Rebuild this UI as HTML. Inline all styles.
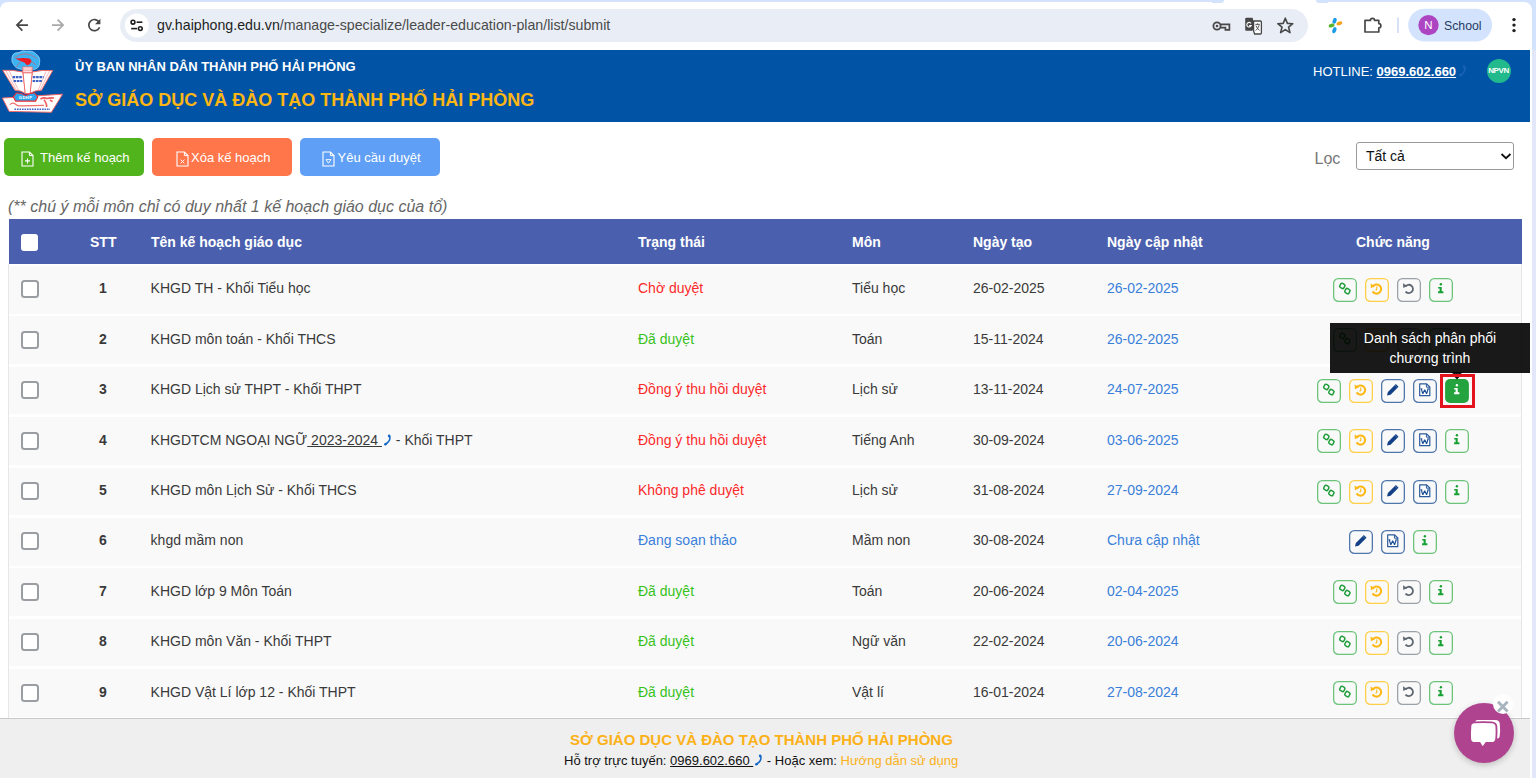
<!DOCTYPE html>
<html><head><meta charset="utf-8">
<style>
*{box-sizing:border-box;margin:0;padding:0}
html,body{width:1536px;height:778px;overflow:hidden;background:#fff;font-family:"Liberation Sans",sans-serif;color:#333}
.abs{position:absolute}
#chrome{position:absolute;left:0;top:0;width:1536px;height:50px;background:#d3e3fd}
#toolbar{position:absolute;left:0;top:2px;width:1532px;height:48px;background:#fff;border-radius:8px 8px 0 0}
#omni{position:absolute;left:120px;top:9px;width:1188px;height:33px;background:#e9eef6;border-radius:17px}
#url{position:absolute;left:157px;top:17px;font-size:14.2px;color:#1f1f1f;white-space:nowrap}
#header{position:absolute;left:0;top:49.5px;width:1530px;height:72.5px;background:#0153a5}
.t1{position:absolute;left:75px;top:59.2px;font-size:13px;font-weight:bold;color:#fff;white-space:nowrap}
.t2{position:absolute;left:75px;top:90.1px;font-size:18px;font-weight:bold;color:#fdb614;white-space:nowrap}
.btn{position:absolute;top:138px;width:140px;height:38px;border-radius:5px;color:#fff;font-size:13px;line-height:38px;text-align:center;white-space:nowrap}
.bt{position:absolute;top:149.6px;font-size:13px;color:#fff;white-space:nowrap}
.note{position:absolute;left:8px;top:198.2px;font-size:16px;font-style:italic;color:#666;white-space:nowrap}
#thead{position:absolute;left:9px;top:219px;width:1513px;height:45px;background:#4a60ae}
.th{position:absolute;top:233.5px;font-size:14px;font-weight:bold;color:#fff;white-space:nowrap}
.row{position:absolute;left:9px;width:1512px;height:47.6px;background:#f9f9f9}
.td{position:absolute;font-size:14px;color:#3a3a3a;white-space:nowrap}
.cbx{position:absolute;left:21px;width:18px;height:18px;border:2px solid #9a9da1;border-radius:3.5px;background:#fff}
.ic{position:absolute;width:24px;height:24px}
.g{border-color:#72c680}
.y{border-color:#ffd152}
.s{border-color:#9ea3aa}
.b{border-color:#5078ac}

.stt{left:90px;width:26px;text-align:center;font-weight:bold}
.cr{color:#fb2a2a}
.cg{color:#37c21b}
.cb{color:#3a7fd9}
.cb2{color:#3a7fd9}
.ic svg{position:absolute;left:0;top:0;overflow:visible}

u{text-decoration:underline}
.ph{display:inline-block;width:10px;height:12px;vertical-align:-1px}
</style></head><body>

<div id="chrome"></div>
<div id="toolbar"></div><div class="abs" style="left:1222px;top:0;width:96px;height:4px;background:#fff"></div><div class="abs" style="left:1212px;top:0;width:12px;height:3px;background:#d3e3fd;border-radius:0 0 6px 0"></div><div class="abs" style="left:1316px;top:0;width:12px;height:3px;background:#d3e3fd;border-radius:0 0 0 6px"></div>
<div id="omni"></div>

<svg class="abs" style="left:0;top:0" width="1536" height="50" viewBox="0 0 1536 50">
 <g fill="none" stroke="#474747" stroke-width="1.7" stroke-linecap="butt">
  <path d="M28 25.1 H17.2 M22.4 19.6 L16.9 25.1 L22.4 30.6"/>
 </g>
 <g fill="none" stroke="#a9a9a9" stroke-width="1.7">
  <path d="M52 25.1 H62.8 M57.6 19.6 L63.1 25.1 L57.6 30.6"/>
 </g>
 <g fill="none" stroke="#474747" stroke-width="1.7">
  <path d="M99.2 22.2 A5.6 5.6 0 1 0 99.6 27.2"/>
 </g>
 <path d="M100.4 18.8 V24.2 H95 Z" fill="#474747"/>
 <circle cx="136.9" cy="25.4" r="12" fill="#fff"/>
 <g fill="none" stroke="#1f1f1f" stroke-width="1.6">
  <circle cx="133" cy="22.2" r="1.9"/><path d="M136.6 22.2 H142.4"/>
  <circle cx="140.3" cy="28.6" r="1.9"/><path d="M131.2 28.6 H137"/>
 </g>
 <g fill="none" stroke="#474747" stroke-width="1.8">
  <circle cx="1217" cy="26" r="3.6"/>
 </g>
 <circle cx="1217" cy="26" r="1.3" fill="#474747"/>
 <path d="M1220.6 24.4 H1229.4 V29.8 H1225.4 V27.6 H1220.6" fill="none" stroke="#474747" stroke-width="1.7"/>
 <rect x="1245.2" y="17.8" width="7.8" height="13" rx="1" fill="#474747"/>
 <path d="M1253.6 21 H1260.4 Q1261.4 21 1261.4 22 V33 Q1261.4 34 1260.4 34 H1254.6 L1253.6 31 Z" fill="#fff" stroke="#474747" stroke-width="1.3"/>
 <path d="M1251 23.4 A2.3 2.3 0 1 0 1251.2 25.6 H1249.2" fill="none" stroke="#fff" stroke-width="1.1"/>
 <path d="M1255.4 24.4 H1259.8 M1257.6 23.2 V24.4 M1256 25.6 Q1257 29 1259.6 30.4 M1259.2 25.2 Q1258 29 1255.6 30.6" fill="none" stroke="#474747" stroke-width="0.9"/>
<path d="M1285.3 18.2 L1287.4 23.4 L1292.8 23.7 L1288.6 27.2 L1290 32.6 L1285.3 29.6 L1280.6 32.6 L1282 27.2 L1277.8 23.7 L1283.2 23.4 Z" fill="none" stroke="#474747" stroke-width="1.6" stroke-linejoin="round"/>
 <ellipse cx="1334.6" cy="20.8" rx="1.9" ry="3" fill="#1a9be8" transform="rotate(20 1334.6 20.8)"/>
 <ellipse cx="1339.4" cy="23.4" rx="1.8" ry="3" fill="#f5a31a" transform="rotate(70 1339.4 23.4)"/>
 <ellipse cx="1331.6" cy="25.6" rx="1.8" ry="3" fill="#59b42d" transform="rotate(75 1331.6 25.6)"/>
 <ellipse cx="1334.4" cy="30.2" rx="1.9" ry="3.2" fill="#1a9be8" transform="rotate(20 1334.4 30.2)"/>
 <path d="M1365 20.4 H1370.4 A2.1 2.1 0 0 1 1374.6 20.4 H1378.8 V23.6 A2.1 2.1 0 0 1 1378.8 27.8 V32 H1365 Z" fill="none" stroke="#474747" stroke-width="1.7" stroke-linejoin="round"/>
<rect x="1397.3" y="17.6" width="1.4" height="15.4" fill="#c6d5f0"/>
 <rect x="1408.2" y="8.7" width="83.8" height="32.8" rx="16.4" fill="#d3e3fd"/>
 <circle cx="1428.5" cy="25.1" r="10.2" fill="#ad45c3"/>
 <text x="1428.5" y="29.2" font-family="Liberation Sans" font-size="11.5" fill="#fff" text-anchor="middle">N</text>
 <text x="1444" y="30" font-family="Liberation Sans" font-size="12.3" fill="#243a63">School</text>
 <circle cx="1514" cy="19.6" r="1.7" fill="#1f1f1f"/><circle cx="1514" cy="25.1" r="1.7" fill="#1f1f1f"/><circle cx="1514" cy="30.6" r="1.7" fill="#1f1f1f"/>
</svg>
<div id="url">gv.haiphong.edu.vn<span style="color:#4a4a4a">/manage-specialize/leader-education-plan/list/submit</span></div>

<div id="header"></div>

<svg class="abs" style="left:0;top:48px" width="66" height="74" viewBox="0 0 66 74">
 <path d="M2.4 50.1 L62.5 46.2 L51.4 64.3 L9.2 63.4 Z" fill="#fff" stroke="#f06a6a" stroke-width="1"/>
 <path d="M9.8 56.6 Q13 54 15.6 56.2 Q18 58.4 21 57.8 L44 57.4" fill="none" stroke="#f07070" stroke-width="1.2"/>
 <path d="M40.4 51 Q44 49 47 50.6 Q50 49.6 54 50 M44 51.6 Q47 56 46.6 59 M50 52 L52.6 53.6" fill="none" stroke="#ef5a5a" stroke-width="1.6"/>
 <path d="M14.5 61.2 H50" stroke="#3b63c9" stroke-width="1.6" stroke-dasharray="1.6 0.9"/>
 <path d="M2.7 22.3 Q12 21.6 23 24 L25.6 45.6 Q20 42 15 42.4 Z" fill="#fff" stroke="#f06a6a" stroke-width="1"/>
 <path d="M52.7 22.6 Q42 21.6 32.2 24 L29.8 45.6 Q35 42 41.4 42.4 Z" fill="#fff" stroke="#f06a6a" stroke-width="1"/>
 <path d="M5.6 22.3 L16.6 42.5 M8.8 22.1 L18.6 42.4 M49.8 22.5 L39.8 42.5 M46.6 22.3 L38 42.4" stroke="#f28a8a" stroke-width="0.6"/>
 <path d="M12.6 29.2 H22.6 M13.6 33 H22.4 M32.8 29.2 H43.6 M32.6 33 H42.4" stroke="#3b62c6" stroke-width="2.2" stroke-dasharray="2.6 0.7"/>
 <path d="M23 24.7 L32.2 24.7 L30.2 45.6 L25.2 45.6 Z" fill="#fff" stroke="#f06a6a" stroke-width="1"/>
 <path d="M11.8 11 Q12 4 19 4.6 Q22 1.8 27 3.2 Q33 2.4 36 6 Q40.6 9 39.6 14.4 Q39.8 20.6 33.6 21.6 Q28 23 22 21.4 Q15.4 20.6 13.6 16.6 Q11.4 14 11.8 11 Z" fill="#3cb4f4" stroke="#bfe6ff" stroke-width="0.6"/>
 <path d="M14 10 Q26 1.4 37 10.6 M16 19 Q24 6 36.4 17" fill="none" stroke="#e9505a" stroke-width="0.6"/>
 <path d="M15.4 10.6 Q22 9.6 27.6 10.2 Q31.4 10.6 31.4 13 Q31 16.6 27 17.2 Q25.4 14.4 21 13 Q18 12.2 15.4 10.6 Z" fill="#ef1b24"/>
 <rect x="22.8" y="19" width="9.4" height="5.7" fill="#fff" stroke="#f06a6a" stroke-width="0.9"/>
 <path d="M23 21 H32 M23 22.8 H32" stroke="#f06a6a" stroke-width="0.7"/>
 <path d="M13.3 48.8 L16.4 45 Q21 44.6 25.8 47.6 Q30 44.6 34.6 45 L37.8 48.8 L35.6 53.1 H15.6 Z" fill="#2ba6ee" stroke="#ee2a30" stroke-width="1.1"/>
 <text x="25.6" y="51.2" font-family="Liberation Sans" font-size="4.2" font-weight="bold" fill="#fff" text-anchor="middle" letter-spacing="0.4">GDHP</text>
</svg>
<div class="t1">ỦY BAN NHÂN DÂN THÀNH PHỐ HẢI PHÒNG</div>
<div class="t2">SỞ GIÁO DỤC VÀ ĐÀO TẠO THÀNH PHỐ HẢI PHÒNG</div>

<div class="btn" style="left:4px;background:#52b41d"></div><div class="bt" style="left:40px">Thêm kế hoạch</div>
<div class="btn" style="left:152px;background:#ff764a"></div><div class="bt" style="left:191px">Xóa kế hoạch</div>
<div class="btn" style="left:300px;background:#5f9ff5"></div><div class="bt" style="left:337.5px">Yêu cầu duyệt</div>


<svg class="abs" style="left:21px;top:151px" width="13" height="16" viewBox="0 0 13 16"><path d="M1 1 H8.4 L12 4.6 V15 H1 Z" fill="none" stroke="#fff" stroke-width="1.1"/><path d="M8.4 1 V4.6 H12" fill="none" stroke="#fff" stroke-width="1"/><path d="M6.5 7.4 V12.4 M4 9.9 H9" stroke="#fff" stroke-width="1.1"/></svg>
<svg class="abs" style="left:176px;top:151px" width="13" height="16" viewBox="0 0 13 16"><path d="M1 1 H8.4 L12 4.6 V15 H1 Z" fill="none" stroke="#fff" stroke-width="1.1"/><path d="M8.4 1 V4.6 H12" fill="none" stroke="#fff" stroke-width="1"/><path d="M4.6 8.6 L8.4 12.4 M8.4 8.6 L4.6 12.4" stroke="#fff" stroke-width="0.9"/></svg>
<svg class="abs" style="left:321.5px;top:151px" width="13" height="16" viewBox="0 0 13 16"><path d="M1 1 H8.4 L12 4.6 V15 H1 Z" fill="none" stroke="#fff" stroke-width="1.1"/><path d="M8.4 1 V4.6 H12" fill="none" stroke="#fff" stroke-width="1"/><path d="M4 8.6 H9 L6.5 12.2 Z" fill="none" stroke="#fff" stroke-width="0.9"/></svg>
<div class="note">(** chú ý mỗi môn chỉ có duy nhất 1 kế hoạch giáo dục của tổ)</div>

<div id="thead"></div>
<div class="abs" style="left:21px;top:234px;width:17px;height:17px;background:#fff;border-radius:3px"></div>
<div class="th" style="left:90px">STT</div>
<div class="th" style="left:151px">Tên kế hoạch giáo dục</div>
<div class="th" style="left:638px">Trạng thái</div>
<div class="th" style="left:852px">Môn</div>
<div class="th" style="left:973px">Ngày tạo</div>
<div class="th" style="left:1107px">Ngày cập nhật</div>
<div class="th" style="left:1356px">Chức năng</div>


<div class="row" style="top:266.00px"></div>
<div class="cbx" style="top:280.40px"></div>
<div class="td stt" style="top:280.30px">1</div>
<div class="td" style="left:150.6px;top:280.30px">KHGD TH - Khối Tiểu học</div>
<div class="td cr" style="left:638px;top:280.30px">Chờ duyệt</div>
<div class="td" style="left:852px;top:280.30px">Tiểu học</div>
<div class="td" style="left:973px;top:280.30px">26-02-2025</div>
<div class="td cb2" style="left:1107px;top:280.30px">26-02-2025</div>
<div class="ic" style="left:1332.70px;top:277.90px"><svg width="24" height="24" viewBox="0 0 24 24"><rect x="0.65" y="0.65" width="22.7" height="22.7" rx="4.6" fill="none" stroke="#6cc47b" stroke-width="1.3"/><g fill="none" stroke="#1f9d3a" stroke-width="1.5"><rect x="7" y="5.6" width="4.6" height="4.6" rx="1.4" transform="rotate(30 9.3 7.9)"/><rect x="12.1" y="10.8" width="4.6" height="4.6" rx="1.4" transform="rotate(30 14.4 13.1)"/></g></svg></div>
<div class="ic" style="left:1364.75px;top:277.90px"><svg width="24" height="24" viewBox="0 0 24 24"><rect x="0.65" y="0.65" width="22.7" height="22.7" rx="4.6" fill="none" stroke="#ffcf4a" stroke-width="1.3"/><path d="M7.6 8.7 A4.6 4.6 0 1 1 7.6 13.4" fill="none" stroke="#fdb813" stroke-width="2.1"/><path d="M5.6 5.4 L10 8.2 L5.9 10.3 Z" fill="#fdb813"/><path d="M11.8 8.6 V11.2 L10.6 12.3" fill="none" stroke="#fdb813" stroke-width="1.1"/></svg></div>
<div class="ic" style="left:1396.80px;top:277.90px"><svg width="24" height="24" viewBox="0 0 24 24"><rect x="0.65" y="0.65" width="22.7" height="22.7" rx="4.6" fill="none" stroke="#9ba1a8" stroke-width="1.3"/><path d="M8.3 8.6 A4.2 4.2 0 1 1 8.5 13.6" fill="none" stroke="#5f6771" stroke-width="1.8"/><path d="M6 5.3 L10.2 8.1 L6.3 10.1 Z" fill="#5f6771"/></svg></div>
<div class="ic" style="left:1428.85px;top:277.90px"><svg width="24" height="24" viewBox="0 0 24 24"><rect x="0.65" y="0.65" width="22.7" height="22.7" rx="4.6" fill="none" stroke="#6cc47b" stroke-width="1.3"/><circle cx="11.9" cy="6.2" r="1.2" fill="#17a134"/><path d="M9.2 8.9 H12.7 V13.3 H14.4 V15.2 H9.1 V13.3 H10.6 V10.5 H9.2 Z" fill="#17a134"/></svg></div>
<div class="row" style="top:316.40px"></div>
<div class="cbx" style="top:330.80px"></div>
<div class="td stt" style="top:330.70px">2</div>
<div class="td" style="left:150.6px;top:330.70px">KHGD môn toán - Khối THCS</div>
<div class="td cg" style="left:638px;top:330.70px">Đã duyệt</div>
<div class="td" style="left:852px;top:330.70px">Toán</div>
<div class="td" style="left:973px;top:330.70px">15-11-2024</div>
<div class="td cb2" style="left:1107px;top:330.70px">26-02-2025</div>
<div class="ic" style="left:1332.70px;top:328.30px"><svg width="24" height="24" viewBox="0 0 24 24"><rect x="0.65" y="0.65" width="22.7" height="22.7" rx="4.6" fill="none" stroke="#6cc47b" stroke-width="1.3"/><g fill="none" stroke="#1f9d3a" stroke-width="1.5"><rect x="7" y="5.6" width="4.6" height="4.6" rx="1.4" transform="rotate(30 9.3 7.9)"/><rect x="12.1" y="10.8" width="4.6" height="4.6" rx="1.4" transform="rotate(30 14.4 13.1)"/></g></svg></div>
<div class="ic" style="left:1364.75px;top:328.30px"><svg width="24" height="24" viewBox="0 0 24 24"><rect x="0.65" y="0.65" width="22.7" height="22.7" rx="4.6" fill="none" stroke="#ffcf4a" stroke-width="1.3"/><path d="M7.6 8.7 A4.6 4.6 0 1 1 7.6 13.4" fill="none" stroke="#fdb813" stroke-width="2.1"/><path d="M5.6 5.4 L10 8.2 L5.9 10.3 Z" fill="#fdb813"/><path d="M11.8 8.6 V11.2 L10.6 12.3" fill="none" stroke="#fdb813" stroke-width="1.1"/></svg></div>
<div class="ic" style="left:1396.80px;top:328.30px"><svg width="24" height="24" viewBox="0 0 24 24"><rect x="0.65" y="0.65" width="22.7" height="22.7" rx="4.6" fill="none" stroke="#9ba1a8" stroke-width="1.3"/><path d="M8.3 8.6 A4.2 4.2 0 1 1 8.5 13.6" fill="none" stroke="#5f6771" stroke-width="1.8"/><path d="M6 5.3 L10.2 8.1 L6.3 10.1 Z" fill="#5f6771"/></svg></div>
<div class="ic" style="left:1428.85px;top:328.30px"><svg width="24" height="24" viewBox="0 0 24 24"><rect x="0.65" y="0.65" width="22.7" height="22.7" rx="4.6" fill="none" stroke="#6cc47b" stroke-width="1.3"/><circle cx="11.9" cy="6.2" r="1.2" fill="#17a134"/><path d="M9.2 8.9 H12.7 V13.3 H14.4 V15.2 H9.1 V13.3 H10.6 V10.5 H9.2 Z" fill="#17a134"/></svg></div>
<div class="row" style="top:366.80px"></div>
<div class="cbx" style="top:381.20px"></div>
<div class="td stt" style="top:381.10px">3</div>
<div class="td" style="left:150.6px;top:381.10px">KHGD Lịch sử THPT - Khối THPT</div>
<div class="td cr" style="left:638px;top:381.10px">Đồng ý thu hồi duyệt</div>
<div class="td" style="left:852px;top:381.10px">Lịch sử</div>
<div class="td" style="left:973px;top:381.10px">13-11-2024</div>
<div class="td cb2" style="left:1107px;top:381.10px">24-07-2025</div>
<div class="ic" style="left:1316.60px;top:378.70px"><svg width="24" height="24" viewBox="0 0 24 24"><rect x="0.65" y="0.65" width="22.7" height="22.7" rx="4.6" fill="none" stroke="#6cc47b" stroke-width="1.3"/><g fill="none" stroke="#1f9d3a" stroke-width="1.5"><rect x="7" y="5.6" width="4.6" height="4.6" rx="1.4" transform="rotate(30 9.3 7.9)"/><rect x="12.1" y="10.8" width="4.6" height="4.6" rx="1.4" transform="rotate(30 14.4 13.1)"/></g></svg></div>
<div class="ic" style="left:1348.65px;top:378.70px"><svg width="24" height="24" viewBox="0 0 24 24"><rect x="0.65" y="0.65" width="22.7" height="22.7" rx="4.6" fill="none" stroke="#ffcf4a" stroke-width="1.3"/><path d="M7.6 8.7 A4.6 4.6 0 1 1 7.6 13.4" fill="none" stroke="#fdb813" stroke-width="2.1"/><path d="M5.6 5.4 L10 8.2 L5.9 10.3 Z" fill="#fdb813"/><path d="M11.8 8.6 V11.2 L10.6 12.3" fill="none" stroke="#fdb813" stroke-width="1.1"/></svg></div>
<div class="ic" style="left:1380.70px;top:378.70px"><svg width="24" height="24" viewBox="0 0 24 24"><rect x="0.65" y="0.65" width="22.7" height="22.7" rx="4.6" fill="none" stroke="#4f77ab" stroke-width="1.3"/><path d="M6 16.6 L6.86 13.06 L14.86 5.06 L17.54 7.74 L9.54 15.74 Z" fill="#123f86"/><path d="M13.9 6.1 L16.5 8.7" stroke="#8aa6d0" stroke-width="0.5"/></svg></div>
<div class="ic" style="left:1412.75px;top:378.70px"><svg width="24" height="24" viewBox="0 0 24 24"><rect x="0.65" y="0.65" width="22.7" height="22.7" rx="4.6" fill="none" stroke="#4f77ab" stroke-width="1.3"/><path d="M6.7 4.8 H13.6 L16.8 8 V16.7 H6.7 Z" fill="#fff" stroke="#2a5a9c" stroke-width="1.2" stroke-linejoin="round"/><path d="M13.4 4.9 V8.2 H16.7" fill="none" stroke="#2a5a9c" stroke-width="1"/><path d="M8.3 9.8 L9.8 14.8 L11.7 10.8 L13.6 14.8 L15.1 9.8" fill="none" stroke="#1d4f94" stroke-width="1.2" stroke-linejoin="bevel"/><path d="M7.5 9.8 H9.4 M14.4 9.8 H16" stroke="#1d4f94" stroke-width="0.9"/></svg></div>
<div class="ic" style="left:1444.80px;top:378.70px"><svg width="24" height="24" viewBox="0 0 24 24"><rect x="0.1" y="0.1" width="23.8" height="23.8" rx="5" fill="#24a33f"/><circle cx="11.9" cy="6.2" r="1.2" fill="#fff"/><path d="M9.2 8.9 H12.7 V13.3 H14.4 V15.2 H9.1 V13.3 H10.6 V10.5 H9.2 Z" fill="#fff"/></svg></div>
<div class="row" style="top:417.20px"></div>
<div class="cbx" style="top:431.60px"></div>
<div class="td stt" style="top:431.50px">4</div>
<div class="td" style="left:150.6px;top:431.50px">KHGDTCM NGOẠI NGỮ<u> 2023-2024 </u><svg width="9" height="12" viewBox="0 0 9 12" style="vertical-align:-1px;margin-left:1px"><path d="M6.3 1.6 Q8.6 6.6 2.2 10.4" stroke="#1468c8" stroke-width="1.5" fill="none"/><ellipse cx="6.2" cy="2" rx="1.3" ry="1.6" fill="#1468c8" transform="rotate(-20 6.2 2)"/><ellipse cx="2.6" cy="10.1" rx="1.7" ry="1.3" fill="#1468c8" transform="rotate(-20 2.6 10.1)"/></svg> - Khối THPT</div>
<div class="td cr" style="left:638px;top:431.50px">Đồng ý thu hồi duyệt</div>
<div class="td" style="left:852px;top:431.50px">Tiếng Anh</div>
<div class="td" style="left:973px;top:431.50px">30-09-2024</div>
<div class="td cb2" style="left:1107px;top:431.50px">03-06-2025</div>
<div class="ic" style="left:1316.60px;top:429.10px"><svg width="24" height="24" viewBox="0 0 24 24"><rect x="0.65" y="0.65" width="22.7" height="22.7" rx="4.6" fill="none" stroke="#6cc47b" stroke-width="1.3"/><g fill="none" stroke="#1f9d3a" stroke-width="1.5"><rect x="7" y="5.6" width="4.6" height="4.6" rx="1.4" transform="rotate(30 9.3 7.9)"/><rect x="12.1" y="10.8" width="4.6" height="4.6" rx="1.4" transform="rotate(30 14.4 13.1)"/></g></svg></div>
<div class="ic" style="left:1348.65px;top:429.10px"><svg width="24" height="24" viewBox="0 0 24 24"><rect x="0.65" y="0.65" width="22.7" height="22.7" rx="4.6" fill="none" stroke="#ffcf4a" stroke-width="1.3"/><path d="M7.6 8.7 A4.6 4.6 0 1 1 7.6 13.4" fill="none" stroke="#fdb813" stroke-width="2.1"/><path d="M5.6 5.4 L10 8.2 L5.9 10.3 Z" fill="#fdb813"/><path d="M11.8 8.6 V11.2 L10.6 12.3" fill="none" stroke="#fdb813" stroke-width="1.1"/></svg></div>
<div class="ic" style="left:1380.70px;top:429.10px"><svg width="24" height="24" viewBox="0 0 24 24"><rect x="0.65" y="0.65" width="22.7" height="22.7" rx="4.6" fill="none" stroke="#4f77ab" stroke-width="1.3"/><path d="M6 16.6 L6.86 13.06 L14.86 5.06 L17.54 7.74 L9.54 15.74 Z" fill="#123f86"/><path d="M13.9 6.1 L16.5 8.7" stroke="#8aa6d0" stroke-width="0.5"/></svg></div>
<div class="ic" style="left:1412.75px;top:429.10px"><svg width="24" height="24" viewBox="0 0 24 24"><rect x="0.65" y="0.65" width="22.7" height="22.7" rx="4.6" fill="none" stroke="#4f77ab" stroke-width="1.3"/><path d="M6.7 4.8 H13.6 L16.8 8 V16.7 H6.7 Z" fill="#fff" stroke="#2a5a9c" stroke-width="1.2" stroke-linejoin="round"/><path d="M13.4 4.9 V8.2 H16.7" fill="none" stroke="#2a5a9c" stroke-width="1"/><path d="M8.3 9.8 L9.8 14.8 L11.7 10.8 L13.6 14.8 L15.1 9.8" fill="none" stroke="#1d4f94" stroke-width="1.2" stroke-linejoin="bevel"/><path d="M7.5 9.8 H9.4 M14.4 9.8 H16" stroke="#1d4f94" stroke-width="0.9"/></svg></div>
<div class="ic" style="left:1444.80px;top:429.10px"><svg width="24" height="24" viewBox="0 0 24 24"><rect x="0.65" y="0.65" width="22.7" height="22.7" rx="4.6" fill="none" stroke="#6cc47b" stroke-width="1.3"/><circle cx="11.9" cy="6.2" r="1.2" fill="#17a134"/><path d="M9.2 8.9 H12.7 V13.3 H14.4 V15.2 H9.1 V13.3 H10.6 V10.5 H9.2 Z" fill="#17a134"/></svg></div>
<div class="row" style="top:467.60px"></div>
<div class="cbx" style="top:482.00px"></div>
<div class="td stt" style="top:481.90px">5</div>
<div class="td" style="left:150.6px;top:481.90px">KHGD môn Lịch Sử - Khối THCS</div>
<div class="td cr" style="left:638px;top:481.90px">Không phê duyệt</div>
<div class="td" style="left:852px;top:481.90px">Lịch sử</div>
<div class="td" style="left:973px;top:481.90px">31-08-2024</div>
<div class="td cb2" style="left:1107px;top:481.90px">27-09-2024</div>
<div class="ic" style="left:1316.60px;top:479.50px"><svg width="24" height="24" viewBox="0 0 24 24"><rect x="0.65" y="0.65" width="22.7" height="22.7" rx="4.6" fill="none" stroke="#6cc47b" stroke-width="1.3"/><g fill="none" stroke="#1f9d3a" stroke-width="1.5"><rect x="7" y="5.6" width="4.6" height="4.6" rx="1.4" transform="rotate(30 9.3 7.9)"/><rect x="12.1" y="10.8" width="4.6" height="4.6" rx="1.4" transform="rotate(30 14.4 13.1)"/></g></svg></div>
<div class="ic" style="left:1348.65px;top:479.50px"><svg width="24" height="24" viewBox="0 0 24 24"><rect x="0.65" y="0.65" width="22.7" height="22.7" rx="4.6" fill="none" stroke="#ffcf4a" stroke-width="1.3"/><path d="M7.6 8.7 A4.6 4.6 0 1 1 7.6 13.4" fill="none" stroke="#fdb813" stroke-width="2.1"/><path d="M5.6 5.4 L10 8.2 L5.9 10.3 Z" fill="#fdb813"/><path d="M11.8 8.6 V11.2 L10.6 12.3" fill="none" stroke="#fdb813" stroke-width="1.1"/></svg></div>
<div class="ic" style="left:1380.70px;top:479.50px"><svg width="24" height="24" viewBox="0 0 24 24"><rect x="0.65" y="0.65" width="22.7" height="22.7" rx="4.6" fill="none" stroke="#4f77ab" stroke-width="1.3"/><path d="M6 16.6 L6.86 13.06 L14.86 5.06 L17.54 7.74 L9.54 15.74 Z" fill="#123f86"/><path d="M13.9 6.1 L16.5 8.7" stroke="#8aa6d0" stroke-width="0.5"/></svg></div>
<div class="ic" style="left:1412.75px;top:479.50px"><svg width="24" height="24" viewBox="0 0 24 24"><rect x="0.65" y="0.65" width="22.7" height="22.7" rx="4.6" fill="none" stroke="#4f77ab" stroke-width="1.3"/><path d="M6.7 4.8 H13.6 L16.8 8 V16.7 H6.7 Z" fill="#fff" stroke="#2a5a9c" stroke-width="1.2" stroke-linejoin="round"/><path d="M13.4 4.9 V8.2 H16.7" fill="none" stroke="#2a5a9c" stroke-width="1"/><path d="M8.3 9.8 L9.8 14.8 L11.7 10.8 L13.6 14.8 L15.1 9.8" fill="none" stroke="#1d4f94" stroke-width="1.2" stroke-linejoin="bevel"/><path d="M7.5 9.8 H9.4 M14.4 9.8 H16" stroke="#1d4f94" stroke-width="0.9"/></svg></div>
<div class="ic" style="left:1444.80px;top:479.50px"><svg width="24" height="24" viewBox="0 0 24 24"><rect x="0.65" y="0.65" width="22.7" height="22.7" rx="4.6" fill="none" stroke="#6cc47b" stroke-width="1.3"/><circle cx="11.9" cy="6.2" r="1.2" fill="#17a134"/><path d="M9.2 8.9 H12.7 V13.3 H14.4 V15.2 H9.1 V13.3 H10.6 V10.5 H9.2 Z" fill="#17a134"/></svg></div>
<div class="row" style="top:518.00px"></div>
<div class="cbx" style="top:532.40px"></div>
<div class="td stt" style="top:532.30px">6</div>
<div class="td" style="left:150.6px;top:532.30px">khgd mầm non</div>
<div class="td cb" style="left:638px;top:532.30px">Đang soạn thảo</div>
<div class="td" style="left:852px;top:532.30px">Mầm non</div>
<div class="td" style="left:973px;top:532.30px">30-08-2024</div>
<div class="td cb2" style="left:1107px;top:532.30px">Chưa cập nhật</div>
<div class="ic" style="left:1348.60px;top:529.90px"><svg width="24" height="24" viewBox="0 0 24 24"><rect x="0.65" y="0.65" width="22.7" height="22.7" rx="4.6" fill="none" stroke="#4f77ab" stroke-width="1.3"/><path d="M6 16.6 L6.86 13.06 L14.86 5.06 L17.54 7.74 L9.54 15.74 Z" fill="#123f86"/><path d="M13.9 6.1 L16.5 8.7" stroke="#8aa6d0" stroke-width="0.5"/></svg></div>
<div class="ic" style="left:1380.65px;top:529.90px"><svg width="24" height="24" viewBox="0 0 24 24"><rect x="0.65" y="0.65" width="22.7" height="22.7" rx="4.6" fill="none" stroke="#4f77ab" stroke-width="1.3"/><path d="M6.7 4.8 H13.6 L16.8 8 V16.7 H6.7 Z" fill="#fff" stroke="#2a5a9c" stroke-width="1.2" stroke-linejoin="round"/><path d="M13.4 4.9 V8.2 H16.7" fill="none" stroke="#2a5a9c" stroke-width="1"/><path d="M8.3 9.8 L9.8 14.8 L11.7 10.8 L13.6 14.8 L15.1 9.8" fill="none" stroke="#1d4f94" stroke-width="1.2" stroke-linejoin="bevel"/><path d="M7.5 9.8 H9.4 M14.4 9.8 H16" stroke="#1d4f94" stroke-width="0.9"/></svg></div>
<div class="ic" style="left:1412.70px;top:529.90px"><svg width="24" height="24" viewBox="0 0 24 24"><rect x="0.65" y="0.65" width="22.7" height="22.7" rx="4.6" fill="none" stroke="#6cc47b" stroke-width="1.3"/><circle cx="11.9" cy="6.2" r="1.2" fill="#17a134"/><path d="M9.2 8.9 H12.7 V13.3 H14.4 V15.2 H9.1 V13.3 H10.6 V10.5 H9.2 Z" fill="#17a134"/></svg></div>
<div class="row" style="top:568.40px"></div>
<div class="cbx" style="top:582.80px"></div>
<div class="td stt" style="top:582.70px">7</div>
<div class="td" style="left:150.6px;top:582.70px">KHGD lớp 9 Môn Toán</div>
<div class="td cg" style="left:638px;top:582.70px">Đã duyệt</div>
<div class="td" style="left:852px;top:582.70px">Toán</div>
<div class="td" style="left:973px;top:582.70px">20-06-2024</div>
<div class="td cb2" style="left:1107px;top:582.70px">02-04-2025</div>
<div class="ic" style="left:1332.70px;top:580.30px"><svg width="24" height="24" viewBox="0 0 24 24"><rect x="0.65" y="0.65" width="22.7" height="22.7" rx="4.6" fill="none" stroke="#6cc47b" stroke-width="1.3"/><g fill="none" stroke="#1f9d3a" stroke-width="1.5"><rect x="7" y="5.6" width="4.6" height="4.6" rx="1.4" transform="rotate(30 9.3 7.9)"/><rect x="12.1" y="10.8" width="4.6" height="4.6" rx="1.4" transform="rotate(30 14.4 13.1)"/></g></svg></div>
<div class="ic" style="left:1364.75px;top:580.30px"><svg width="24" height="24" viewBox="0 0 24 24"><rect x="0.65" y="0.65" width="22.7" height="22.7" rx="4.6" fill="none" stroke="#ffcf4a" stroke-width="1.3"/><path d="M7.6 8.7 A4.6 4.6 0 1 1 7.6 13.4" fill="none" stroke="#fdb813" stroke-width="2.1"/><path d="M5.6 5.4 L10 8.2 L5.9 10.3 Z" fill="#fdb813"/><path d="M11.8 8.6 V11.2 L10.6 12.3" fill="none" stroke="#fdb813" stroke-width="1.1"/></svg></div>
<div class="ic" style="left:1396.80px;top:580.30px"><svg width="24" height="24" viewBox="0 0 24 24"><rect x="0.65" y="0.65" width="22.7" height="22.7" rx="4.6" fill="none" stroke="#9ba1a8" stroke-width="1.3"/><path d="M8.3 8.6 A4.2 4.2 0 1 1 8.5 13.6" fill="none" stroke="#5f6771" stroke-width="1.8"/><path d="M6 5.3 L10.2 8.1 L6.3 10.1 Z" fill="#5f6771"/></svg></div>
<div class="ic" style="left:1428.85px;top:580.30px"><svg width="24" height="24" viewBox="0 0 24 24"><rect x="0.65" y="0.65" width="22.7" height="22.7" rx="4.6" fill="none" stroke="#6cc47b" stroke-width="1.3"/><circle cx="11.9" cy="6.2" r="1.2" fill="#17a134"/><path d="M9.2 8.9 H12.7 V13.3 H14.4 V15.2 H9.1 V13.3 H10.6 V10.5 H9.2 Z" fill="#17a134"/></svg></div>
<div class="row" style="top:618.80px"></div>
<div class="cbx" style="top:633.20px"></div>
<div class="td stt" style="top:633.10px">8</div>
<div class="td" style="left:150.6px;top:633.10px">KHGD môn Văn - Khối THPT</div>
<div class="td cg" style="left:638px;top:633.10px">Đã duyệt</div>
<div class="td" style="left:852px;top:633.10px">Ngữ văn</div>
<div class="td" style="left:973px;top:633.10px">22-02-2024</div>
<div class="td cb2" style="left:1107px;top:633.10px">20-06-2024</div>
<div class="ic" style="left:1332.70px;top:630.70px"><svg width="24" height="24" viewBox="0 0 24 24"><rect x="0.65" y="0.65" width="22.7" height="22.7" rx="4.6" fill="none" stroke="#6cc47b" stroke-width="1.3"/><g fill="none" stroke="#1f9d3a" stroke-width="1.5"><rect x="7" y="5.6" width="4.6" height="4.6" rx="1.4" transform="rotate(30 9.3 7.9)"/><rect x="12.1" y="10.8" width="4.6" height="4.6" rx="1.4" transform="rotate(30 14.4 13.1)"/></g></svg></div>
<div class="ic" style="left:1364.75px;top:630.70px"><svg width="24" height="24" viewBox="0 0 24 24"><rect x="0.65" y="0.65" width="22.7" height="22.7" rx="4.6" fill="none" stroke="#ffcf4a" stroke-width="1.3"/><path d="M7.6 8.7 A4.6 4.6 0 1 1 7.6 13.4" fill="none" stroke="#fdb813" stroke-width="2.1"/><path d="M5.6 5.4 L10 8.2 L5.9 10.3 Z" fill="#fdb813"/><path d="M11.8 8.6 V11.2 L10.6 12.3" fill="none" stroke="#fdb813" stroke-width="1.1"/></svg></div>
<div class="ic" style="left:1396.80px;top:630.70px"><svg width="24" height="24" viewBox="0 0 24 24"><rect x="0.65" y="0.65" width="22.7" height="22.7" rx="4.6" fill="none" stroke="#9ba1a8" stroke-width="1.3"/><path d="M8.3 8.6 A4.2 4.2 0 1 1 8.5 13.6" fill="none" stroke="#5f6771" stroke-width="1.8"/><path d="M6 5.3 L10.2 8.1 L6.3 10.1 Z" fill="#5f6771"/></svg></div>
<div class="ic" style="left:1428.85px;top:630.70px"><svg width="24" height="24" viewBox="0 0 24 24"><rect x="0.65" y="0.65" width="22.7" height="22.7" rx="4.6" fill="none" stroke="#6cc47b" stroke-width="1.3"/><circle cx="11.9" cy="6.2" r="1.2" fill="#17a134"/><path d="M9.2 8.9 H12.7 V13.3 H14.4 V15.2 H9.1 V13.3 H10.6 V10.5 H9.2 Z" fill="#17a134"/></svg></div>
<div class="row" style="top:669.20px"></div>
<div class="cbx" style="top:683.60px"></div>
<div class="td stt" style="top:683.50px">9</div>
<div class="td" style="left:150.6px;top:683.50px">KHGD Vật Lí lớp 12 - Khối THPT</div>
<div class="td cg" style="left:638px;top:683.50px">Đã duyệt</div>
<div class="td" style="left:852px;top:683.50px">Vật lí</div>
<div class="td" style="left:973px;top:683.50px">16-01-2024</div>
<div class="td cb2" style="left:1107px;top:683.50px">27-08-2024</div>
<div class="ic" style="left:1332.70px;top:681.10px"><svg width="24" height="24" viewBox="0 0 24 24"><rect x="0.65" y="0.65" width="22.7" height="22.7" rx="4.6" fill="none" stroke="#6cc47b" stroke-width="1.3"/><g fill="none" stroke="#1f9d3a" stroke-width="1.5"><rect x="7" y="5.6" width="4.6" height="4.6" rx="1.4" transform="rotate(30 9.3 7.9)"/><rect x="12.1" y="10.8" width="4.6" height="4.6" rx="1.4" transform="rotate(30 14.4 13.1)"/></g></svg></div>
<div class="ic" style="left:1364.75px;top:681.10px"><svg width="24" height="24" viewBox="0 0 24 24"><rect x="0.65" y="0.65" width="22.7" height="22.7" rx="4.6" fill="none" stroke="#ffcf4a" stroke-width="1.3"/><path d="M7.6 8.7 A4.6 4.6 0 1 1 7.6 13.4" fill="none" stroke="#fdb813" stroke-width="2.1"/><path d="M5.6 5.4 L10 8.2 L5.9 10.3 Z" fill="#fdb813"/><path d="M11.8 8.6 V11.2 L10.6 12.3" fill="none" stroke="#fdb813" stroke-width="1.1"/></svg></div>
<div class="ic" style="left:1396.80px;top:681.10px"><svg width="24" height="24" viewBox="0 0 24 24"><rect x="0.65" y="0.65" width="22.7" height="22.7" rx="4.6" fill="none" stroke="#9ba1a8" stroke-width="1.3"/><path d="M8.3 8.6 A4.2 4.2 0 1 1 8.5 13.6" fill="none" stroke="#5f6771" stroke-width="1.8"/><path d="M6 5.3 L10.2 8.1 L6.3 10.1 Z" fill="#5f6771"/></svg></div>
<div class="ic" style="left:1428.85px;top:681.10px"><svg width="24" height="24" viewBox="0 0 24 24"><rect x="0.65" y="0.65" width="22.7" height="22.7" rx="4.6" fill="none" stroke="#6cc47b" stroke-width="1.3"/><circle cx="11.9" cy="6.2" r="1.2" fill="#17a134"/><path d="M9.2 8.9 H12.7 V13.3 H14.4 V15.2 H9.1 V13.3 H10.6 V10.5 H9.2 Z" fill="#17a134"/></svg></div>

<div class="abs" style="left:8px;top:264px;width:1px;height:454px;background:#e6e6e6"></div><div class="abs" style="left:1521px;top:264px;width:1px;height:454px;background:#e6e6e6"></div>
<div id="footer" class="abs" style="left:0;top:718px;width:1530px;height:60px;background:#efefef;border-top:1.5px solid #c9c9c9"></div>
<div class="abs" style="left:570px;top:730.8px;font-size:15px;font-weight:bold;color:#fbb117;white-space:nowrap">SỞ GIÁO DỤC VÀ ĐÀO TẠO THÀNH PHỐ HẢI PHÒNG</div>
<div class="abs" style="left:564px;top:753.4px;font-size:13px;color:#111;white-space:nowrap">Hỗ trợ trực tuyến: <u>0969.602.660 </u><svg width="9" height="12" viewBox="0 0 9 12" style="vertical-align:-1px;margin-left:1px"><path d="M6.3 1.6 Q8.6 6.6 2.2 10.4" stroke="#1468c8" stroke-width="1.5" fill="none"/><ellipse cx="6.2" cy="2" rx="1.3" ry="1.6" fill="#1468c8" transform="rotate(-20 6.2 2)"/><ellipse cx="2.6" cy="10.1" rx="1.7" ry="1.3" fill="#1468c8" transform="rotate(-20 2.6 10.1)"/></svg> - Hoặc xem: <span style="color:#fbb117">Hướng dẫn sử dụng</span></div>

<div class="abs" style="left:1313px;top:64px;font-size:13px;color:#fff;white-space:nowrap">HOTLINE: <b><u>0969.602.660</u></b><svg width="9" height="12" viewBox="0 0 9 12" style="vertical-align:-1px;margin-left:2px"><path d="M6.3 1.6 Q8.6 6.6 2.2 10.4" stroke="#1a63b8" stroke-width="1.5" fill="none"/><ellipse cx="6.2" cy="2" rx="1.3" ry="1.6" fill="#1a63b8" transform="rotate(-20 6.2 2)"/><ellipse cx="2.6" cy="10.1" rx="1.7" ry="1.3" fill="#1a63b8" transform="rotate(-20 2.6 10.1)"/></svg></div>
<div class="abs" style="left:1486.5px;top:59px;width:24px;height:24px;border-radius:50%;background:#22b98c;color:#fff;font-size:8px;font-weight:bold;line-height:24px;text-align:center;letter-spacing:-0.4px">NPVN</div>

<div class="abs" style="left:1314.5px;top:150px;font-size:16px;color:#777;white-space:nowrap">Lọc</div>
<div class="abs" style="left:1356px;top:142px;width:158px;height:27.5px;border:1px solid #9a9a9a;border-radius:3px;background:#fff"></div>
<div class="abs" style="left:1366px;top:147.7px;font-size:14px;color:#111;white-space:nowrap">Tất cả</div>
<svg class="abs" style="left:1500px;top:151px" width="12" height="10" viewBox="0 0 12 10"><path d="M1.5 3 L6 7.2 L10.5 3" fill="none" stroke="#111" stroke-width="1.8"/></svg>

<div class="abs" style="left:1330px;top:323px;width:200px;height:49.7px;background:rgba(0,0,0,0.9)"></div>
<div class="abs" style="left:1330px;top:328px;width:200px;font-size:14px;line-height:20px;color:#fff;text-align:center">Danh sách phân phối<br>chương trình</div>
<svg class="abs" style="left:1451px;top:372px" width="12" height="5" viewBox="0 0 12 5"><path d="M0 0 H12 L6 5 Z" fill="rgba(0,0,0,0.9)"/></svg>
<svg class="abs" style="left:1453px;top:376px" width="8" height="4" viewBox="0 0 8 4"><path d="M0.6 0 H7.4 L4 3.6 Z" fill="#111"/></svg><div class="abs" style="left:1440px;top:374.2px;width:35px;height:33.5px;border:3px solid #e3141e"></div>

<div class="abs" style="left:1454.3px;top:702.7px;width:60px;height:60px;border-radius:50%;background:#b0438f;box-shadow:0 2px 6px rgba(0,0,0,0.2)"></div>
<div class="abs" style="left:1493.3px;top:694px;width:20px;height:20px;border-radius:50%;background:#fff"></div>
<svg class="abs" style="left:1496px;top:700px" width="14" height="14" viewBox="0 0 14 14"><path d="M2 1.8 L11.6 11.6 M11.6 1.8 L2 11.6" stroke="#a9b5be" stroke-width="2.9"/></svg>


<svg class="abs" style="left:1462px;top:712px" width="44" height="44" viewBox="0 0 44 44">
 <path d="M13.2 9.4 Q13.6 8 16 8 H33 Q37.6 8 37.8 12 Q38.6 19 37.6 24.5 Q37.2 26 36 26.4 L30 26 Z" fill="#fff"/>
 <path d="M8.4 14.6 Q8.2 10.6 12.6 10.4 Q21 9.8 29.6 10.4 Q34.2 10.8 34.4 14.6 Q34.8 21 34.2 27 Q33.8 30.8 29.6 31 H24.2 L20.6 35.8 L17.6 31 H12.6 Q8.4 30.8 8.2 27 Q7.8 21 8.4 14.6 Z" fill="#fff" stroke="#b0438f" stroke-width="1.8"/>
</svg>
<div class="abs" style="left:1530px;top:50px;width:6px;height:728px;background:#e2e7fa;border-left:2px solid #fff"></div>
</body></html>
